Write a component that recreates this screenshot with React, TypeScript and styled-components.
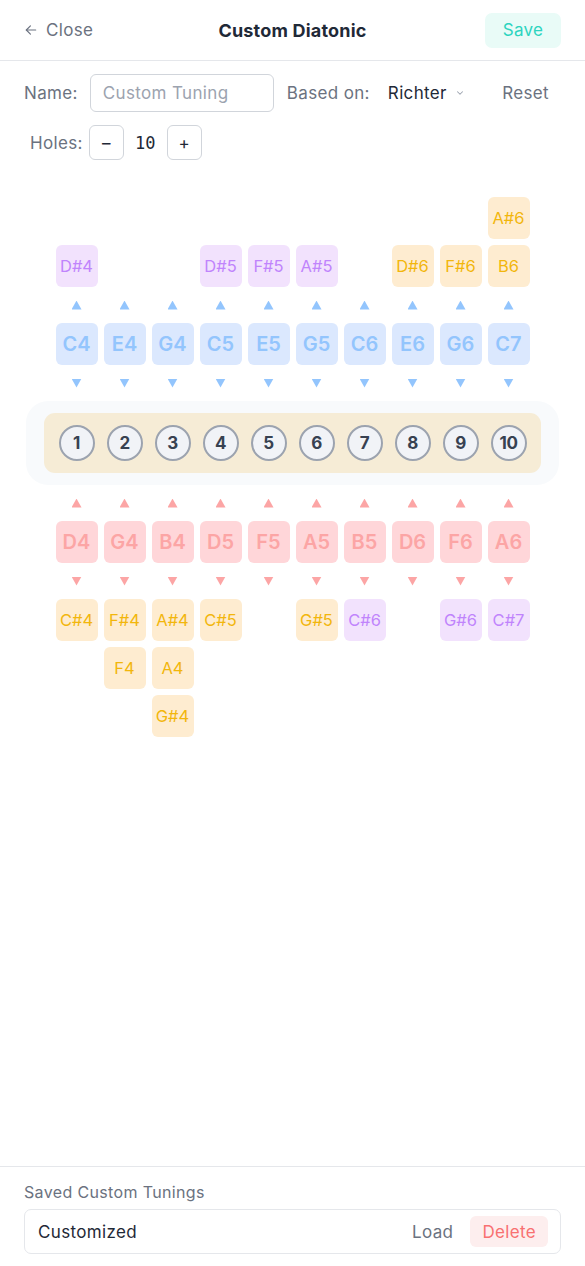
import React from "react";
import styled, { createGlobalStyle } from "styled-components";

const GlobalStyle = createGlobalStyle`
  * { box-sizing: border-box; }
  html, body { margin: 0; padding: 0; background: #ffffff; }
  body { font-family: Inter, "Noto Sans", sans-serif; color: #1f2937; letter-spacing: 0.35px; }
  button, input { letter-spacing: 0.35px; }
`;

type Tone = "purple" | "orange" | "blue" | "red";

const tones: Record<Tone, { bg: string; fg: string; size: number; weight: number }> = {
  purple: { bg: "#f2e2fd", fg: "#c084fc", size: 16.5, weight: 400 },
  orange: { bg: "#feecd0", fg: "#f2b60c", size: 16.5, weight: 400 },
  blue: { bg: "#dbe8fe", fg: "#93c5fd", size: 20, weight: 600 },
  red: { bg: "#ffd6d9", fg: "#fca5a5", size: 20, weight: 600 },
};

const Page = styled.div`
  min-height: 100vh;
  display: flex;
  flex-direction: column;
`;

const Header = styled.header`
  height: 61px;
  display: flex;
  align-items: center;
  justify-content: space-between;
  padding: 0 24px;
  border-bottom: 1px solid #e5e7eb;
  position: relative;
`;

const CloseButton = styled.button`
  display: flex;
  align-items: center;
  gap: 8px;
  border: none;
  background: none;
  padding: 0;
  font: inherit;
  font-size: 17px;
  color: #6b7280;
`;

const Title = styled.h1`
  position: absolute;
  left: 50%;
  top: 50%;
  transform: translate(-50%, -50%);
  margin: 0;
  font-size: 18px;
  font-weight: 700;
  color: #1f2937;
  letter-spacing: 0.2px;
  white-space: nowrap;
`;

const SaveButton = styled.button`
  width: 76px;
  height: 35px;
  border: none;
  border-radius: 7px;
  background: #e9fbf7;
  color: #2dd4bf;
  font: inherit;
  font-size: 17px;
`;

const Controls = styled.div`
  display: flex;
  flex-direction: column;
  gap: 13px;
  padding: 13px 24px 0;
`;

const Row = styled.div<{ $indent?: number }>`
  display: flex;
  align-items: center;
  padding-left: ${(p) => p.$indent ?? 0}px;
`;

const Label = styled.span<{ $gap?: number }>`
  font-size: 17px;
  color: #6b7280;
  margin-right: ${(p) => p.$gap ?? 0}px;
`;

const NameInput = styled.input`
  width: 184px;
  height: 38px;
  border: 1px solid #d1d5db;
  border-radius: 6px;
  padding: 0 12px;
  font: inherit;
  font-size: 17px;
  color: #1f2937;
  margin-right: 13px;
  &::placeholder { color: #9ca3af; }
`;

const SelectLike = styled.div`
  display: flex;
  align-items: center;
  gap: 8px;
  font-size: 17px;
  color: #1f2937;
  margin-left: 18px;
`;

const TextButton = styled.button`
  margin-left: auto;
  border: none;
  background: none;
  padding: 0;
  font: inherit;
  font-size: 17px;
  color: #6b7280;
  margin-right: 12px;
`;

const StepButton = styled.button`
  width: 35px;
  height: 35px;
  border: 1px solid #d1d5db;
  border-radius: 6px;
  background: #fff;
  font: inherit;
  font-size: 17px;
  color: #1f2937;
  display: flex;
  align-items: center;
  justify-content: center;
  padding: 0;
`;

const Count = styled.span`
  font-family: "DejaVu Sans Mono", "Liberation Mono", monospace;
  font-size: 17px;
  letter-spacing: 0;
  color: #1f2937;
  width: 43px;
  text-align: center;
`;

const Diagram = styled.div`
  display: flex;
  flex-direction: column;
  align-items: center;
  padding-top: 37px;
  letter-spacing: 0;
`;

const Grid = styled.div<{ $align: "start" | "end" }>`
  display: grid;
  grid-template-columns: repeat(10, 42px);
  column-gap: 6px;
  align-items: ${(p) => p.$align};
`;

const Stack = styled.div<{ $reverse?: boolean }>`
  display: flex;
  flex-direction: ${(p) => (p.$reverse ? "column-reverse" : "column")};
  gap: 6px;
`;

const Cell = styled.div<{ $tone: Tone }>`
  width: 42px;
  height: 42px;
  border-radius: 6px;
  display: flex;
  align-items: center;
  justify-content: center;
  background: ${(p) => tones[p.$tone].bg};
  color: ${(p) => tones[p.$tone].fg};
  font-size: ${(p) => tones[p.$tone].size}px;
  font-weight: ${(p) => tones[p.$tone].weight};
  white-space: nowrap;
`;

const ArrowRow = styled.div`
  display: grid;
  grid-template-columns: repeat(10, 42px);
  column-gap: 6px;
  height: 36px;
  align-items: center;
  justify-items: center;
`;

const Arrow = styled.div<{ $dir: "up" | "down"; $color: string }>`
  width: 10px;
  height: 9px;
  background: ${(p) => p.$color};
  clip-path: ${(p) =>
    p.$dir === "up" ? "polygon(50% 0, 100% 100%, 0 100%)" : "polygon(0 0, 100% 0, 50% 100%)"};
`;

const HarmonicaShell = styled.div`
  padding: 12px 18px;
  background: #f8fafc;
  border-radius: 22px;
`;

const HarmonicaBody = styled.div`
  display: flex;
  gap: 12px;
  padding: 12px 14.5px;
  background: #f6ecd6;
  border-radius: 11px;
`;

const Hole = styled.div`
  width: 36px;
  height: 36px;
  border-radius: 50%;
  border: 2.5px solid #9ca3af;
  background: #f1f3f7;
  display: flex;
  align-items: center;
  justify-content: center;
  font-size: 17px;
  font-weight: 700;
  color: #374151;
  letter-spacing: -0.5px;
`;

const Footer = styled.footer`
  margin-top: auto;
  border-top: 1px solid #e5e7eb;
  padding: 13px 24px 12px;
  display: flex;
  flex-direction: column;
  gap: 5px;
`;

const FooterLabel = styled.div`
  font-size: 16px;
  color: #6b7280;
  line-height: 24px;
`;

const SavedItem = styled.div`
  height: 45px;
  border: 1px solid #e5e7eb;
  border-radius: 7px;
  display: flex;
  align-items: center;
  padding: 0 12px 0 13px;
  gap: 17px;
`;

const SavedName = styled.span`
  font-size: 17px;
  color: #1f2937;
  margin-right: auto;
`;

const LoadButton = styled.button`
  border: none;
  background: none;
  padding: 0;
  font: inherit;
  font-size: 17px;
  color: #6b7280;
`;

const DeleteButton = styled.button`
  border: none;
  background: #fdeeee;
  border-radius: 6px;
  padding: 0 12px;
  height: 31px;
  font: inherit;
  font-size: 17px;
  color: #f87171;
`;

type Note = { n: string; t: Tone };

const blow = ["C4", "E4", "G4", "C5", "E5", "G5", "C6", "E6", "G6", "C7"];
const draw = ["D4", "G4", "B4", "D5", "F5", "A5", "B5", "D6", "F6", "A6"];

const above: Note[][] = [
  [{ n: "D#4", t: "purple" }],
  [],
  [],
  [{ n: "D#5", t: "purple" }],
  [{ n: "F#5", t: "purple" }],
  [{ n: "A#5", t: "purple" }],
  [],
  [{ n: "D#6", t: "orange" }],
  [{ n: "F#6", t: "orange" }],
  [
    { n: "B6", t: "orange" },
    { n: "A#6", t: "orange" },
  ],
];

const below: Note[][] = [
  [{ n: "C#4", t: "orange" }],
  [
    { n: "F#4", t: "orange" },
    { n: "F4", t: "orange" },
  ],
  [
    { n: "A#4", t: "orange" },
    { n: "A4", t: "orange" },
    { n: "G#4", t: "orange" },
  ],
  [{ n: "C#5", t: "orange" }],
  [],
  [{ n: "G#5", t: "orange" }],
  [{ n: "C#6", t: "purple" }],
  [],
  [{ n: "G#6", t: "purple" }],
  [{ n: "C#7", t: "purple" }],
];

const Arrows = ({ dir, color }: { dir: "up" | "down"; color: string }) => (
  <ArrowRow>
    {blow.map((_, i) => (
      <Arrow key={i} $dir={dir} $color={color} />
    ))}
  </ArrowRow>
);

const BackArrow = () => (
  <svg width="14" height="14" viewBox="0 0 24 24" fill="none" stroke="#6b7280" strokeWidth="2" strokeLinecap="round" strokeLinejoin="round">
    <path d="M20 12H4" />
    <path d="M11 19l-7-7 7-7" />
  </svg>
);

const Chevron = () => (
  <svg width="10" height="10" viewBox="0 0 24 24" fill="none" stroke="#9ca3af" strokeWidth="2.5" strokeLinecap="round" strokeLinejoin="round">
    <path d="M6 9l6 6 6-6" />
  </svg>
);

export default function App() {
  return (
    <Page>
      <GlobalStyle />
      <Header>
        <CloseButton>
          <BackArrow />
          Close
        </CloseButton>
        <Title>Custom Diatonic</Title>
        <SaveButton>Save</SaveButton>
      </Header>

      <Controls>
        <Row>
          <Label $gap={12}>Name:</Label>
          <NameInput placeholder="Custom Tuning" />
          <Label>Based on:</Label>
          <SelectLike>
            Richter
            <Chevron />
          </SelectLike>
          <TextButton>Reset</TextButton>
        </Row>
        <Row $indent={6}>
          <Label $gap={6}>Holes:</Label>
          <StepButton>–</StepButton>
          <Count>10</Count>
          <StepButton>+</StepButton>
        </Row>
      </Controls>

      <Diagram>
        <Grid $align="end">
          {above.map((col, i) => (
            <Stack key={i} $reverse>
              {col.map((c) => (
                <Cell key={c.n} $tone={c.t}>{c.n}</Cell>
              ))}
            </Stack>
          ))}
        </Grid>
        <Arrows dir="up" color="#93c5fd" />
        <Grid $align="start">
          {blow.map((n) => (
            <Cell key={n} $tone="blue">{n}</Cell>
          ))}
        </Grid>
        <Arrows dir="down" color="#93c5fd" />
        <HarmonicaShell>
          <HarmonicaBody>
            {blow.map((_, i) => (
              <Hole key={i}>{i + 1}</Hole>
            ))}
          </HarmonicaBody>
        </HarmonicaShell>
        <Arrows dir="up" color="#fca5a5" />
        <Grid $align="start">
          {draw.map((n) => (
            <Cell key={n} $tone="red">{n}</Cell>
          ))}
        </Grid>
        <Arrows dir="down" color="#fca5a5" />
        <Grid $align="start">
          {below.map((col, i) => (
            <Stack key={i}>
              {col.map((c) => (
                <Cell key={c.n} $tone={c.t}>{c.n}</Cell>
              ))}
            </Stack>
          ))}
        </Grid>
      </Diagram>

      <Footer>
        <FooterLabel>Saved Custom Tunings</FooterLabel>
        <SavedItem>
          <SavedName>Customized</SavedName>
          <LoadButton>Load</LoadButton>
          <DeleteButton>Delete</DeleteButton>
        </SavedItem>
      </Footer>
    </Page>
  );
}
